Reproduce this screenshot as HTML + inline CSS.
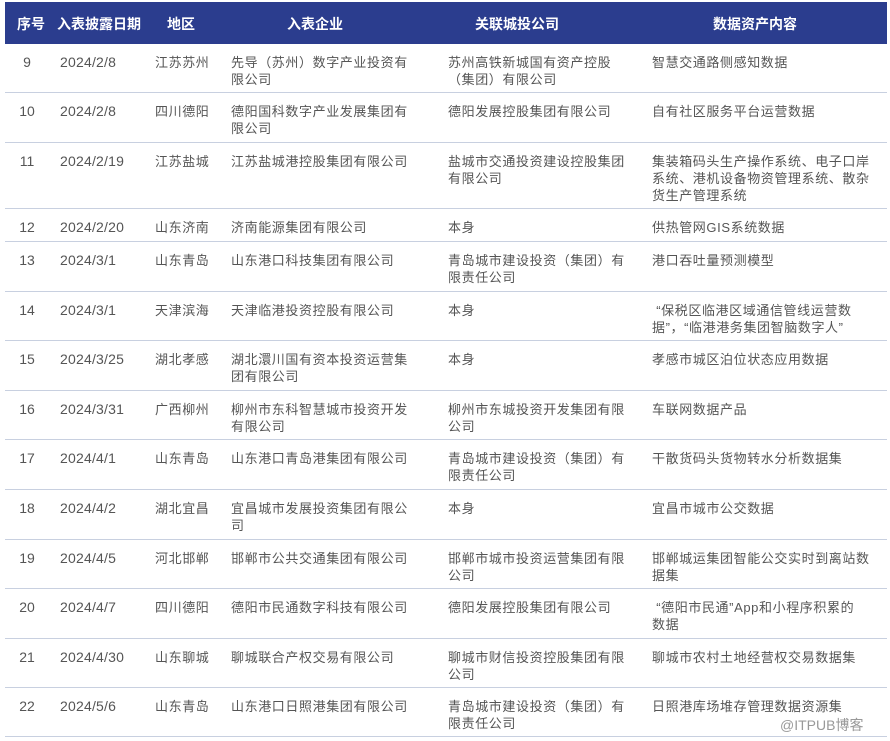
<!DOCTYPE html>
<html><head><meta charset="utf-8"><style>
body{margin:0;background:#fff;width:890px;height:741px;overflow:hidden;font-family:"Liberation Sans","Noto Sans CJK SC",sans-serif;}
.hd{position:absolute;left:5px;top:2px;width:882px;height:42px;background:#2b3d8e;}
.hd span{position:absolute;top:12px;color:#fff;font-weight:bold;font-size:14px;white-space:nowrap;}
.r{position:absolute;left:5px;width:882px;border-bottom:1.5px solid #c8d0e0;}
.r span{position:absolute;top:10px;font-size:13px;line-height:17px;color:#555;white-space:nowrap;letter-spacing:0.6px;}
.a{left:0;width:44px;text-align:center;letter-spacing:0!important;font-size:14px!important}
.b{left:55px;font-size:14px!important;letter-spacing:0.2px!important}.c{left:150px}.d{left:226px}.e{left:443px}.f{left:647px}
.wm{position:absolute;left:780px;top:715px;font-size:14px;color:#999;}
</style></head><body>
<div class="hd"><span style="left:12px">序号</span><span style="left:52px">入表披露日期</span><span style="left:162px">地区</span><span style="left:282px">入表企业</span><span style="left:470px">关联城投公司</span><span style="left:708px">数据资产内容</span></div>

<div class="r" style="top:44px;height:48px"><span class="a">9</span><span class="b">2024/2/8</span><span class="c">江苏苏州</span><span class="d">先导（苏州）数字产业投资有<br>限公司</span><span class="e">苏州高铁新城国有资产控股<br>（集团）有限公司</span><span class="f">智慧交通路侧感知数据</span></div>
<div class="r" style="top:93px;height:49px"><span class="a">10</span><span class="b">2024/2/8</span><span class="c">四川德阳</span><span class="d">德阳国科数字产业发展集团有<br>限公司</span><span class="e">德阳发展控股集团有限公司</span><span class="f">自有社区服务平台运营数据</span></div>
<div class="r" style="top:143px;height:65px"><span class="a">11</span><span class="b">2024/2/19</span><span class="c">江苏盐城</span><span class="d">江苏盐城港控股集团有限公司</span><span class="e">盐城市交通投资建设控股集团<br>有限公司</span><span class="f">集装箱码头生产操作系统、电子口岸<br>系统、港机设备物资管理系统、散杂<br>货生产管理系统</span></div>
<div class="r" style="top:209px;height:32px"><span class="a">12</span><span class="b">2024/2/20</span><span class="c">山东济南</span><span class="d">济南能源集团有限公司</span><span class="e">本身</span><span class="f">供热管网GIS系统数据</span></div>
<div class="r" style="top:242px;height:49px"><span class="a">13</span><span class="b">2024/3/1</span><span class="c">山东青岛</span><span class="d">山东港口科技集团有限公司</span><span class="e">青岛城市建设投资（集团）有<br>限责任公司</span><span class="f">港口吞吐量预测模型</span></div>
<div class="r" style="top:292px;height:48px"><span class="a">14</span><span class="b">2024/3/1</span><span class="c">天津滨海</span><span class="d">天津临港投资控股有限公司</span><span class="e">本身</span><span class="f">&nbsp;“保税区临港区域通信管线运营数<br>据”，“临港港务集团智脑数字人”</span></div>
<div class="r" style="top:341px;height:49px"><span class="a">15</span><span class="b">2024/3/25</span><span class="c">湖北孝感</span><span class="d">湖北澴川国有资本投资运营集<br>团有限公司</span><span class="e">本身</span><span class="f">孝感市城区泊位状态应用数据</span></div>
<div class="r" style="top:391px;height:48px"><span class="a">16</span><span class="b">2024/3/31</span><span class="c">广西柳州</span><span class="d">柳州市东科智慧城市投资开发<br>有限公司</span><span class="e">柳州市东城投资开发集团有限<br>公司</span><span class="f">车联网数据产品</span></div>
<div class="r" style="top:440px;height:49px"><span class="a">17</span><span class="b">2024/4/1</span><span class="c">山东青岛</span><span class="d">山东港口青岛港集团有限公司</span><span class="e">青岛城市建设投资（集团）有<br>限责任公司</span><span class="f">干散货码头货物转水分析数据集</span></div>
<div class="r" style="top:490px;height:49px"><span class="a">18</span><span class="b">2024/4/2</span><span class="c">湖北宜昌</span><span class="d">宜昌城市发展投资集团有限公<br>司</span><span class="e">本身</span><span class="f">宜昌市城市公交数据</span></div>
<div class="r" style="top:540px;height:48px"><span class="a">19</span><span class="b">2024/4/5</span><span class="c">河北邯郸</span><span class="d">邯郸市公共交通集团有限公司</span><span class="e">邯郸市城市投资运营集团有限<br>公司</span><span class="f">邯郸城运集团智能公交实时到离站数<br>据集</span></div>
<div class="r" style="top:589px;height:49px"><span class="a">20</span><span class="b">2024/4/7</span><span class="c">四川德阳</span><span class="d">德阳市民通数字科技有限公司</span><span class="e">德阳发展控股集团有限公司</span><span class="f">&nbsp;“德阳市民通”App和小程序积累的<br>数据</span></div>
<div class="r" style="top:639px;height:48px"><span class="a">21</span><span class="b">2024/4/30</span><span class="c">山东聊城</span><span class="d">聊城联合产权交易有限公司</span><span class="e">聊城市财信投资控股集团有限<br>公司</span><span class="f">聊城市农村土地经营权交易数据集</span></div>
<div class="r" style="top:688px;height:48px"><span class="a">22</span><span class="b">2024/5/6</span><span class="c">山东青岛</span><span class="d">山东港口日照港集团有限公司</span><span class="e">青岛城市建设投资（集团）有<br>限责任公司</span><span class="f">日照港库场堆存管理数据资源集</span></div>
<div class="wm">@ITPUB博客</div>
</body></html>
